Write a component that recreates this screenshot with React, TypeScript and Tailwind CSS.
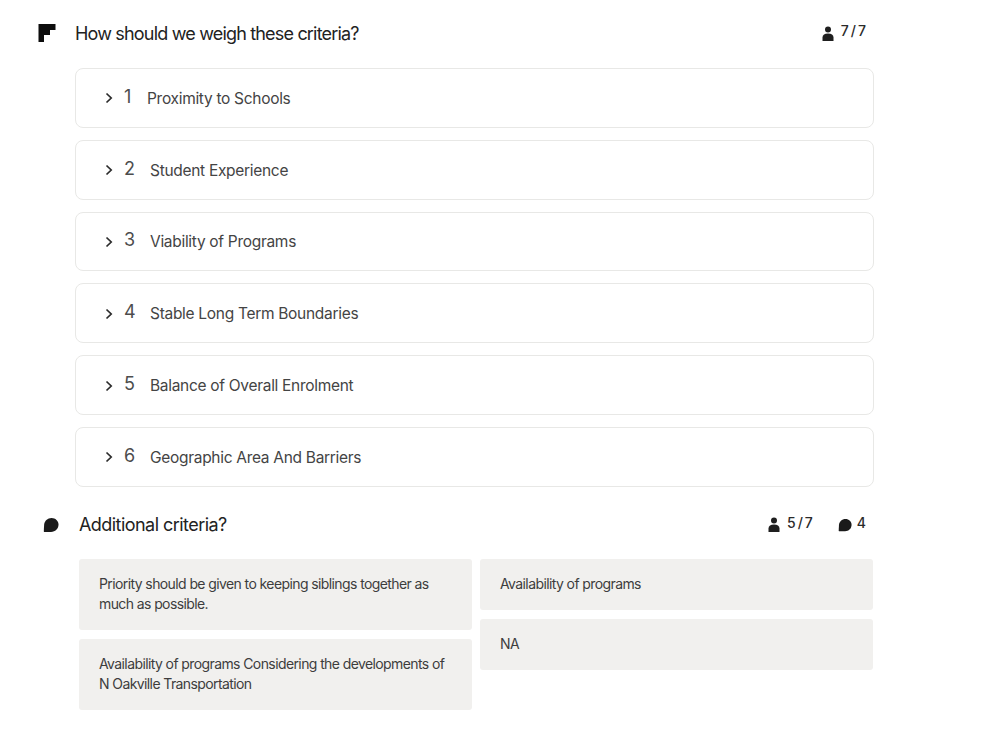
const criteria = [
  { rank: 1, label: "Proximity to Schools", gap: "w-[13px]" },
  { rank: 2, label: "Student Experience", gap: "w-[16px]" },
  { rank: 3, label: "Viability of Programs", gap: "w-[16px]" },
  { rank: 4, label: "Stable Long Term Boundaries", gap: "w-[16px]" },
  { rank: 5, label: "Balance of Overall Enrolment", gap: "w-[16px]" },
  { rank: 6, label: "Geographic Area And Barriers", gap: "w-[16px]" },
];

function PersonIcon() {
  return (
    <svg width="12" height="15" viewBox="0 0 12 15" fill="#1f1f1f">
      <circle cx="6" cy="3.4" r="3" />
      <path d="M0.5 15V11.5C0.5 8.8 2.6 7.4 6 7.4C9.4 7.4 11.5 8.8 11.5 11.5V15Z" />
    </svg>
  );
}

function BubbleIcon({ size = 16 }: { size?: number }) {
  return (
    <svg width={size} height={size} viewBox="0 0 16 16" fill="#1a1a1a">
      <path d="M8.6 1C12.4 1 15.5 3.9 15.5 7.6C15.5 11.8 12.2 15 8 15H1.2C1 15 .8 14.8 .8 14.6L1.1 8C1.3 4 4.5 1 8.6 1Z" />
    </svg>
  );
}

function Count({ value }: { value: string }) {
  return (
    <div className="flex items-center gap-[7px]">
      <PersonIcon />
      <span className="text-[14px] leading-[14px] font-medium tracking-[2px] text-[#2a2a2a] relative top-[-2px] mr-[-1px]">{value}</span>
    </div>
  );
}

function Chevron() {
  return (
    <svg width="8" height="12" viewBox="0 0 8 12" fill="none" stroke="#2b2b2b" strokeWidth="1.7">
      <path d="M1.5 1.5L6.2 6L1.5 10.5" />
    </svg>
  );
}

function Note({ children }: { children: React.ReactNode }) {
  return (
    <div className="bg-[#f1f0ee] rounded-[3px] px-[20px] pt-[15px] pb-[16px] text-[14px] leading-[20px] tracking-[-0.6px] text-[#3d3d3d]">
      {children}
    </div>
  );
}

export default function App() {
  return (
    <div className="w-[983px] h-[751px] bg-white pt-[20px] font-['Inter',sans-serif] overflow-hidden">
      <div className="flex items-center h-[26px] pl-[38px] w-[867px]">
        <svg width="18" height="18" viewBox="0 0 18 18" fill="#0d0d0d" className="shrink-0">
          <path d="M0.5 0H17.5V6H12V11H6V18H0.5Z" />
        </svg>
        <h2 className="ml-[19px] text-[18px] tracking-[-0.82px] text-[#222] font-normal">How should we weigh these criteria?</h2>
        <div className="ml-auto">
          <Count value="7/7" />
        </div>
      </div>

      <div className="ml-[75px] w-[799px] mt-[22px] flex flex-col gap-[12px]">
        {criteria.map((c) => (
          <div key={c.rank} className="h-[59.8px] rounded-[8px] border border-[#e8e8e6] flex items-center pl-[29px] pt-[1px]">
            <Chevron />
            <span className="ml-[11px] w-[10px] text-[18px] text-[#4d4d4d] relative top-[-2px]">{c.rank}</span>
            <span className={`${c.gap} shrink-0`} />
            <span className="text-[15.5px] tracking-[-0.3px] text-[#444]">{c.label}</span>
          </div>
        ))}
      </div>

      <div className="flex items-center h-[26px] mt-[25px] pl-[43px] w-[866px]">
        <BubbleIcon />
        <h2 className="ml-[20px] text-[18px] tracking-[-0.55px] text-[#222] font-normal">Additional criteria?</h2>
        <div className="ml-auto flex items-center gap-[24px]">
          <Count value="5/7" />
          <div className="flex items-center gap-[5px]">
            <BubbleIcon size={14} />
            <span className="text-[14px] leading-[14px] font-medium text-[#2a2a2a] relative top-[-2px]">4</span>
          </div>
        </div>
      </div>

      <div className="ml-[79px] w-[794px] mt-[21px] grid grid-cols-2 gap-x-[8px] items-start">
        <div className="flex flex-col gap-[9px]">
          <Note>Priority should be given to keeping siblings together as much as possible.</Note>
          <Note>Availability of programs Considering the developments of N Oakville Transportation</Note>
        </div>
        <div className="flex flex-col gap-[9px]">
          <Note>Availability of programs</Note>
          <Note>NA</Note>
        </div>
      </div>
    </div>
  );
}
